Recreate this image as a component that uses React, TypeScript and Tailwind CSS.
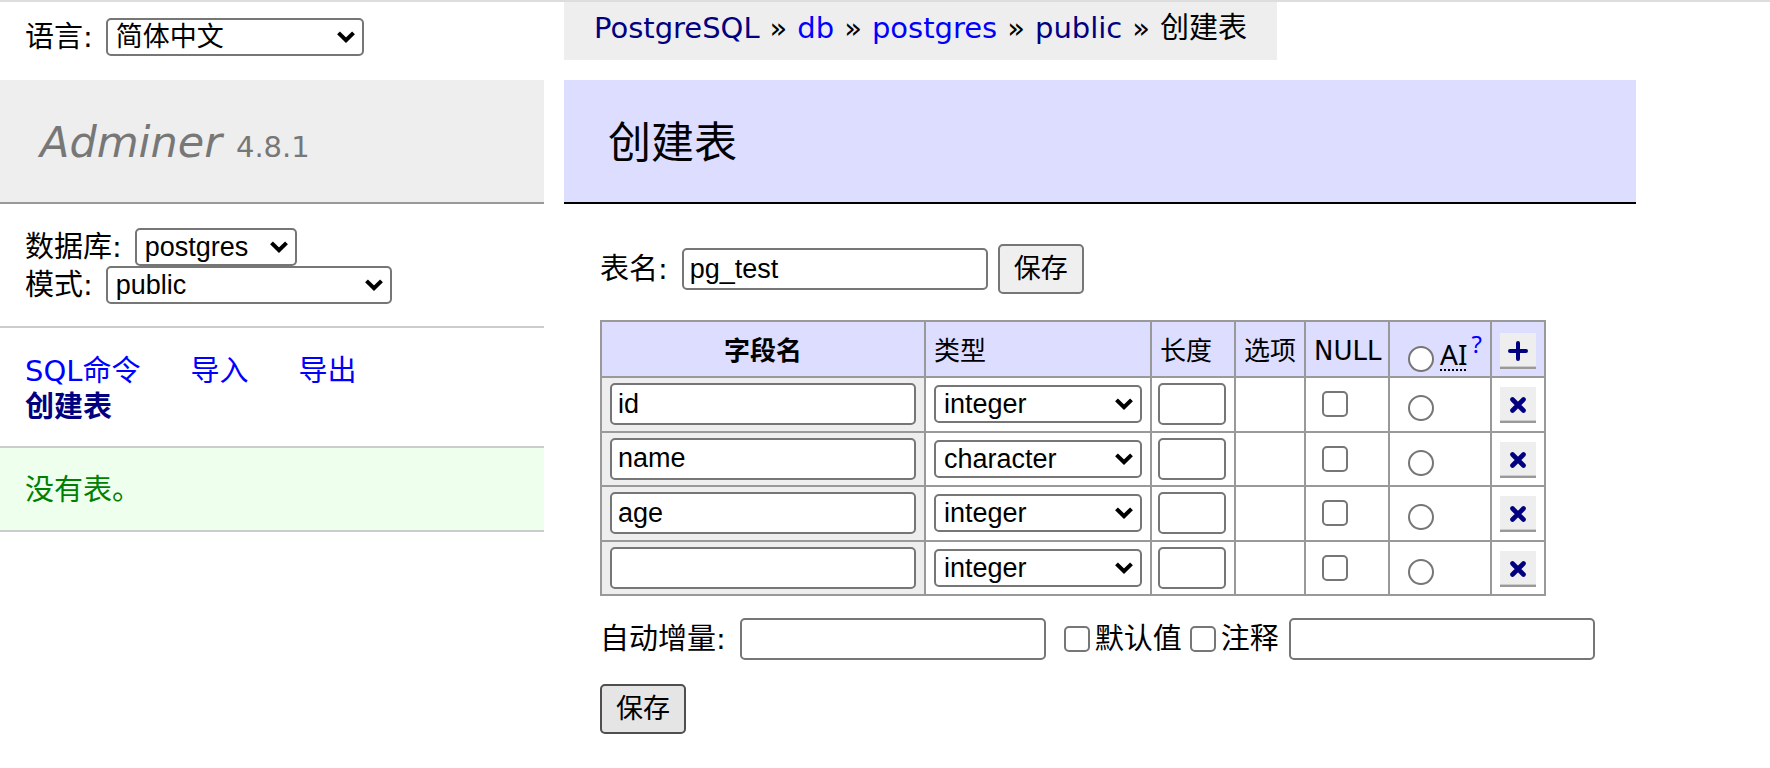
import type { InputHTMLAttributes, ReactNode } from "react";

const cx = (...parts: (string | undefined)[]) => parts.filter(Boolean).join(" ");

const LINK = "text-[#0000ff] hover:text-red-600 hover:underline";
const VISITED = "text-[#000080] hover:text-red-600 hover:underline";
const CONTROL_FONT =
  "font-['Liberation_Sans','Noto_Sans_CJK_SC',sans-serif] text-[27px] text-black";

function Select({
  id,
  label,
  value,
  options,
  className,
}: {
  id: string;
  label?: string;
  value: string;
  options: string[];
  className: string;
}) {
  return (
    <span className={cx("relative block", className)}>
      <select
        id={id}
        aria-label={label}
        defaultValue={value}
        className={cx(
          "block h-[38px] w-full appearance-none rounded-[5px] border-2 border-[#767676] bg-white pl-2 pr-8 leading-8",
          CONTROL_FONT
        )}
      >
        {options.map((o) => (
          <option key={o}>{o}</option>
        ))}
      </select>
      <svg
        aria-hidden="true"
        viewBox="0 0 18 12"
        className="pointer-events-none absolute right-[9px] top-[13px] h-3 w-[18px]"
      >
        <path d="M1.5 1.8 L9 9.2 L16.5 1.8" fill="none" stroke="#000" strokeWidth="4" />
      </svg>
    </span>
  );
}

function TextBox({ className, ...rest }: InputHTMLAttributes<HTMLInputElement>) {
  return (
    <input
      type="text"
      {...rest}
      className={cx(
        "block h-[42px] rounded-[5px] border-2 border-[#767676] bg-white px-[6px]",
        CONTROL_FONT,
        className
      )}
    />
  );
}

function CheckBox(props: InputHTMLAttributes<HTMLInputElement>) {
  return (
    <input
      type="checkbox"
      {...props}
      className="block size-[26px] appearance-none rounded-[5px] border-2 border-[#767676] bg-white checked:border-[#0075ff] checked:bg-[#0075ff]"
    />
  );
}

function Radio(props: InputHTMLAttributes<HTMLInputElement>) {
  return (
    <input
      type="radio"
      name="auto_increment_col"
      {...props}
      className="block size-[26px] appearance-none rounded-full border-2 border-[#767676] bg-white checked:border-8 checked:border-[#0075ff]"
    />
  );
}

function SaveButton({ active }: { active?: boolean }) {
  return (
    <button
      type="submit"
      className={cx(
        "h-[50px] w-[86px] rounded-[5px] border-2",
        CONTROL_FONT,
        active ? "border-[#4f4f4f] bg-[#e5e5e5]" : "border-[#767676] bg-[#efefef]"
      )}
    >
      保存
    </button>
  );
}

function IconButton({ label, children }: { label: string; children: ReactNode }) {
  return (
    <button
      type="button"
      aria-label={label}
      className="mx-auto block size-9 border-b-2 border-[#999] bg-[#eee] shadow-[inset_0_-1px_0_#ccc]"
    >
      <svg
        viewBox="0 0 36 34"
        className="block h-[34px] w-9"
        fill="none"
        stroke="#000080"
        strokeLinecap="round"
      >
        {children}
      </svg>
    </button>
  );
}

const TYPES = ["integer", "bigint", "boolean", "character", "character varying", "text"];

const FIELDS = [
  { name: "id", type: "integer" },
  { name: "name", type: "character" },
  { name: "age", type: "integer" },
  { name: "", type: "integer" },
];

const CELL = "border-2 border-[#999] px-2 py-0 text-left align-middle";
const HEAD_CELL = "border-2 border-[#999] px-2 pb-0 pt-1 text-left align-middle";

function Sidebar() {
  return (
    <aside className="w-[544px] shrink-0">
      <div className="flex h-[78px] items-start pl-[25px] pt-4">
        <label htmlFor="lang" className="mr-[13px] leading-[38px]">
          语言:
        </label>
        <Select id="lang" value="简体中文" options={["简体中文", "English"]} className="w-[258px]" />
      </div>
      <h1 className="flex h-[124px] items-center border-b-2 border-[#999] bg-[#eee] pl-10 pt-2 text-[#777]">
        <span className="flex items-baseline gap-[14px]">
          <a href="#home" className="text-[43px] italic leading-none">
            Adminer
          </a>
          <span>4.8.1</span>
        </span>
      </h1>
      <div className="border-b-2 border-[#ccc] pb-[22px] pl-[25px] pt-6">
        <div className="flex items-center">
          <label htmlFor="database" className="mr-[13px] leading-none">
            数据库:
          </label>
          <Select id="database" value="postgres" options={["postgres", "template1"]} className="w-[162px]" />
        </div>
        <div className="flex items-center">
          <label htmlFor="schema" className="mr-[13px] leading-none">
            模式:
          </label>
          <Select
            id="schema"
            value="public"
            options={["public", "information_schema", "pg_catalog"]}
            className="w-[286px]"
          />
        </div>
      </div>
      <nav className="border-b-2 border-[#ccc] pb-[21px] pl-[25px] pt-[25px] leading-9">
        <div className="flex gap-[50px]">
          <a href="#sql" className={LINK}>
            SQL命令
          </a>
          <a href="#import" className={LINK}>
            导入
          </a>
          <a href="#export" className={LINK}>
            导出
          </a>
        </div>
        <a href="#create" className="block font-bold text-[#000080]">
          创建表
        </a>
      </nav>
      <p className="flex h-[84px] items-center border-b-2 border-[#ccc] bg-[#eeffee] pl-[25px] pt-1 text-[#008000]">
        没有表。
      </p>
    </aside>
  );
}

function FieldTable() {
  return (
    <table className="h-[276px] w-[946px] table-fixed border-collapse text-[26px] leading-none">
      <colgroup>
        <col className="w-[324px]" />
        <col className="w-[226px]" />
        <col className="w-[84px]" />
        <col className="w-[70px]" />
        <col className="w-[84px]" />
        <col className="w-[102px]" />
        <col className="w-[54px]" />
      </colgroup>
      <thead>
        <tr className="h-14 bg-[#ddddff]">
          <th className="border-2 border-[#999] px-2 pb-0 pt-1 text-center font-bold">字段名</th>
          <td className={HEAD_CELL}>类型</td>
          <td className={HEAD_CELL}>长度</td>
          <td className={HEAD_CELL}>选项</td>
          <td className={HEAD_CELL}>NULL</td>
          <td className={HEAD_CELL}>
            <div className="flex items-end gap-[6px] pl-[10px]">
              <div className="pt-4">
                <Radio id="ai-none" aria-label="无自动增量" />
              </div>
              <div className="flex items-start pb-1 font-['Noto_Sans',sans-serif]">
                <label
                  htmlFor="ai-none"
                  title="自动增量"
                  className="mt-2 text-[28px] leading-none underline decoration-dotted decoration-2 underline-offset-4"
                >
                  AI
                </label>
                <a href="#help" className="ml-1 text-2xl leading-none text-[#0000ff]">
                  ?
                </a>
              </div>
            </div>
          </td>
          <td className="border-2 border-[#999] px-0 pb-0 pt-1 align-middle">
            <IconButton label="添加">
              <path d="M10 18 H26 M18 10 V26" strokeWidth="4" />
            </IconButton>
          </td>
        </tr>
      </thead>
      <tbody>
        {FIELDS.map((f, i) => (
          <tr key={i} className="h-[54px]">
            <th className={cx(CELL, "bg-[#eee] font-normal")}>
              <TextBox aria-label="字段名" defaultValue={f.name} className="w-full" />
            </th>
            <td className={CELL}>
              <Select id={`type-${i}`} label="类型" value={f.type} options={TYPES} className="w-full" />
            </td>
            <td className="border-2 border-[#999] py-0 pl-[6px] pr-2 align-middle">
              <TextBox aria-label="长度" className="w-full" />
            </td>
            <td className={CELL} />
            <td className={CELL}>
              <div className="pl-2">
                <CheckBox aria-label="NULL" />
              </div>
            </td>
            <td className={CELL}>
              <div className="pl-[10px] pt-2">
                <Radio aria-label="AI" />
              </div>
            </td>
            <td className="border-2 border-[#999] px-0 pb-0 pt-[2px] align-middle">
              <IconButton label="移除">
                <path d="M12.5 12.5 L23.5 23.5 M23.5 12.5 L12.5 23.5" strokeWidth="4.6" />
              </IconButton>
            </td>
          </tr>
        ))}
      </tbody>
    </table>
  );
}

export default function App() {
  return (
    <div className="flex gap-5 border-t-2 border-[#ddd] bg-white font-['DejaVu_Sans','Noto_Sans_CJK_SC',sans-serif] text-[29px] text-black">
      <Sidebar />
      <main className="mr-[134px] flex min-w-0 flex-1 flex-col items-start">
        <nav
          aria-label="路径"
          className="mb-5 flex h-[58px] items-start gap-[10px] whitespace-nowrap bg-[#eee] px-[30px] pt-2 leading-9"
        >
          <a href="#server" className={VISITED}>
            PostgreSQL
          </a>
          <span>»</span>
          <a href="#db" className={LINK}>
            db
          </a>
          <span>»</span>
          <a href="#postgres" className={LINK}>
            postgres
          </a>
          <span>»</span>
          <a href="#public" className={VISITED}>
            public
          </a>
          <span>»</span>
          <span>创建表</span>
        </nav>
        <h2 className="flex h-[124px] w-full items-center border-b-2 border-black bg-[#ddddff] pl-11 pt-1 text-[43px]">
          创建表
        </h2>
        <form className="pl-9 pt-10" onSubmit={(e) => e.preventDefault()}>
          <div className="mb-[26px] flex items-center">
            <label htmlFor="table-name" className="mr-[14px] leading-none">
              表名:
            </label>
            <TextBox id="table-name" defaultValue="pg_test" className="mr-[10px] w-[306px]" />
            <SaveButton />
          </div>
          <FieldTable />
          <div className="mb-6 mt-[22px] flex items-center whitespace-nowrap">
            <label htmlFor="auto-increment" className="mr-[14px] leading-none">
              自动增量:
            </label>
            <TextBox id="auto-increment" className="mr-[18px] w-[306px]" />
            <label className="mr-2 flex items-center gap-[5px] leading-none">
              <CheckBox />
              默认值
            </label>
            <label className="mr-[10px] flex items-center gap-[5px] leading-none">
              <CheckBox />
              注释
            </label>
            <TextBox aria-label="注释" className="w-[306px]" />
          </div>
          <SaveButton active />
        </form>
      </main>
    </div>
  );
}
